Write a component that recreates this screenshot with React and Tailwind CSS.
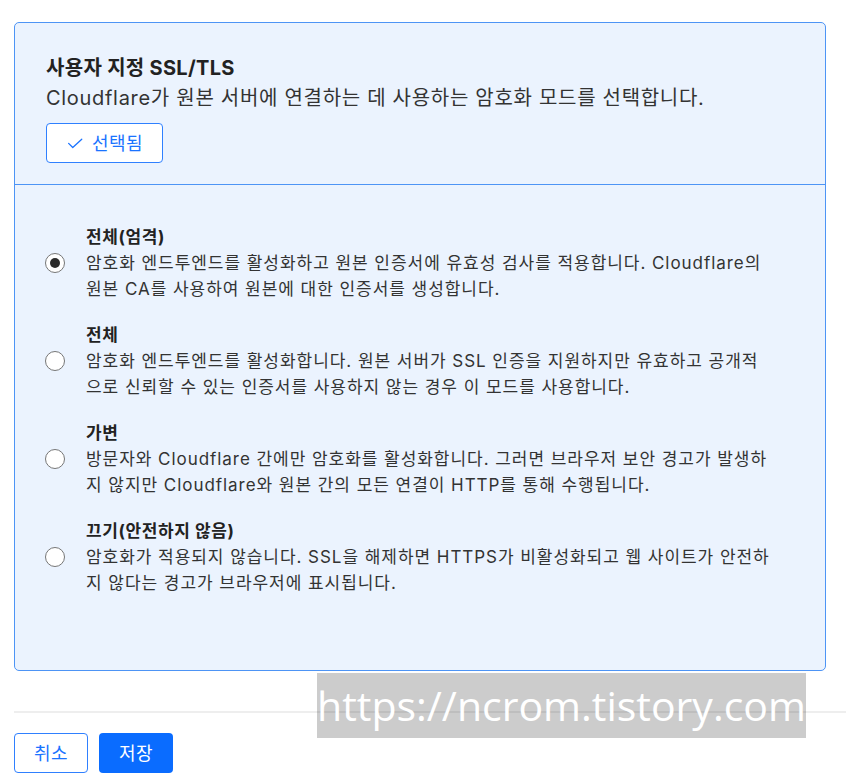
import React from "react";

function Radio({ checked }) {
  return (
    <div className="w-[20px] h-[20px] shrink-0 rounded-full border border-[#767676] bg-white flex items-center justify-center">
      {checked && <div className="w-[10px] h-[10px] rounded-full bg-[#2b2b2b]" />}
    </div>
  );
}

function Option({ title, lines, checked }) {
  return (
    <div className="flex items-center">
      <div className="w-[41px] shrink-0">
        <Radio checked={checked} />
      </div>
      <div className="text-[17px] leading-[26px] text-[#333333] tracking-[0.95px]">
        <div className="font-bold text-[#222222] tracking-[0.6px]">{title}</div>
        {lines.map((l, i) => (
          <div key={i} className="whitespace-nowrap">{l}</div>
        ))}
      </div>
    </div>
  );
}

export default function App() {
  return (
    <div className="relative w-[846px] h-[778px] bg-white overflow-hidden font-['Inter','Noto_Sans_CJK_KR',sans-serif]">
      <div className="pt-[22px] pl-[14px] pr-[20px]">
        <div className="rounded-[5px] border border-[#4d94f5] bg-[#ebf3fe]">
          <div className="pl-[31px] pt-[30px] pb-[21px] border-b border-[#4d94f5]">
            <div className="text-[20px] leading-[30px] font-bold text-[#222222] tracking-[0.3px]">사용자 지정 SSL/TLS</div>
            <div className="text-[20px] leading-[30px] text-[#333333] tracking-[0.7px] whitespace-nowrap">
              Cloudflare가 원본 서버에 연결하는 데 사용하는 암호화 모드를 선택합니다.
            </div>
            <button className="mt-[10px] w-[117px] h-[40px] rounded-[4px] border border-[#2f80ff] bg-white flex items-center justify-center gap-[8px] text-[#1a73ff] text-[18px]">
              <svg width="18" height="18" viewBox="0 0 24 24" fill="none" stroke="currentColor" strokeWidth="1.7" strokeLinecap="round" strokeLinejoin="round">
                <path d="M3.5 12.5l5.5 5.5L21 7" />
              </svg>
              <span className="tracking-[0.5px]">선택됨</span>
            </button>
          </div>
          <div className="pl-[30px] pt-[39px] pb-[74px] flex flex-col gap-[20px]">
            <Option
              checked
              title="전체(엄격)"
              lines={[
                "암호화 엔드투엔드를 활성화하고 원본 인증서에 유효성 검사를 적용합니다. Cloudflare의",
                "원본 CA를 사용하여 원본에 대한 인증서를 생성합니다.",
              ]}
            />
            <Option
              title="전체"
              lines={[
                "암호화 엔드투엔드를 활성화합니다. 원본 서버가 SSL 인증을 지원하지만 유효하고 공개적",
                "으로 신뢰할 수 있는 인증서를 사용하지 않는 경우 이 모드를 사용합니다.",
              ]}
            />
            <Option
              title="가변"
              lines={[
                "방문자와 Cloudflare 간에만 암호화를 활성화합니다. 그러면 브라우저 보안 경고가 발생하",
                "지 않지만 Cloudflare와 원본 간의 모든 연결이 HTTP를 통해 수행됩니다.",
              ]}
            />
            <Option
              title="끄기(안전하지 않음)"
              lines={[
                "암호화가 적용되지 않습니다. SSL을 해제하면 HTTPS가 비활성화되고 웹 사이트가 안전하",
                "지 않다는 경고가 브라우저에 표시됩니다.",
              ]}
            />
          </div>
        </div>
      </div>
      <div className="ml-[14px] mt-[40px] h-[2px] bg-[#eeeeee]" />
      <div className="pl-[14px] pt-[20px] flex gap-[11px]">
        <button className="w-[74px] h-[40px] rounded-[4px] border border-[#2f80ff] bg-white text-[#1a73ff] text-[18px] tracking-[0.5px]">취소</button>
        <button className="w-[74px] h-[40px] rounded-[4px] bg-[#0a6cff] text-white text-[18px] tracking-[0.5px]">저장</button>
      </div>
      <div className="absolute left-[317px] top-[673px] w-[489px] h-[65px] bg-black/20 flex items-center justify-center">
        <span className="text-white text-[41px] leading-none font-['Open_Sans',sans-serif]">https://ncrom.tistory.com</span>
      </div>
    </div>
  );
}
